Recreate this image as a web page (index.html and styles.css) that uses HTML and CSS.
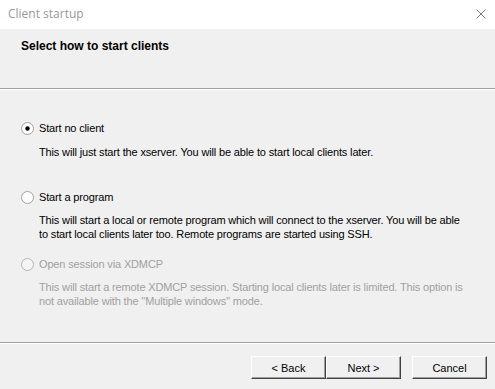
FILE: index.html
```html
<html lang="en">
  <head>
    <meta charset="UTF-8" />
    <link rel="stylesheet" href="styles.css">
    <title>Client startup</title>
  </head>
  <body>
    <div class="window">
      <div class="titlebar">
        <span class="title">Client startup</span>
        <svg class="close" width="10" height="10" viewBox="0 0 10 10">
          <path d="M0.5 0.5 L9.5 9.5 M9.5 0.5 L0.5 9.5" stroke="#7a7a7a" stroke-width="1" fill="none" />
        </svg>
      </div>

      <div class="header">
        <h1>Select how to start clients</h1>
      </div>

      <main class="options">
        <div class="option option-first">
          <label class="choice">
            <svg class="radio" width="13" height="13" viewBox="0 0 13 13">
              <circle cx="6.5" cy="6.5" r="6" fill="#fff" stroke="#a0a0a0" />
              <circle cx="6.5" cy="6.5" r="2.2" fill="#000" />
            </svg>
            Start no client
          </label>
          <p>This will just start the xserver. You will be able to start local clients later.</p>
        </div>

        <div class="option option-second">
          <label class="choice">
            <svg class="radio" width="13" height="13" viewBox="0 0 13 13">
              <circle cx="6.5" cy="6.5" r="6" fill="#fff" stroke="#a0a0a0" />
            </svg>
            Start a program
          </label>
          <p>This will start a local or remote program which will connect to the xserver. You will be able to start local clients later too. Remote programs are started using SSH.</p>
        </div>

        <div class="option option-third disabled">
          <label class="choice">
            <svg class="radio" width="13" height="13" viewBox="0 0 13 13">
              <circle cx="6.5" cy="6.5" r="6" fill="#f4f4f4" stroke="#b4b4b4" />
            </svg>
            Open session via XDMCP
          </label>
          <p>This will start a remote XDMCP session. Starting local clients later is limited. This option is not available with the ''Multiple windows'' mode.</p>
        </div>
      </main>

      <footer class="footer">
        <div class="pair">
          <button class="btn">&lt; Back</button>
          <button class="btn">Next &gt;</button>
        </div>
        <button class="btn">Cancel</button>
      </footer>
    </div>
  </body>
</html>
```

FILE: styles.css
```css
*,
*::after,
*::before {
  margin: 0;
  padding: 0;
  box-sizing: border-box;
}

body {
  background-color: #f0f0f0;
  font-family: "Liberation Sans", Arial, sans-serif;
  font-size: 11px;
  color: #000;
}

.window {
  width: 495px;
  height: 389px;
  display: flex;
  flex-direction: column;
  overflow: hidden;
}

.titlebar {
  height: 29px;
  background-color: #fff;
  display: flex;
  justify-content: space-between;
  align-items: center;
  padding: 0 9px 2px 8px;
}
.titlebar .title {
  font-family: "Open Sans", "Liberation Sans", sans-serif;
  font-size: 12px;
  color: #999999;
}

.header {
  height: 60px;
  background-color: #f0f0f0;
  border-bottom: 1px solid #a0a0a0;
  box-shadow: 0 1px 0 #fff;
  padding: 10px 0 0 21px;
}
.header h1 {
  font-size: 12px;
  font-weight: bold;
  line-height: 14px;
}

.options {
  height: 253px;
  padding: 0 0 0 21px;
  letter-spacing: -0.15px;
}
.option p {
  padding-left: 18px;
  padding-right: 28px;
  line-height: 14px;
}
.choice {
  display: flex;
  align-items: center;
  gap: 5px;
  line-height: 14px;
  height: 14px;
}
.option-first {
  margin-top: 32px;
}
.option-second {
  margin-top: 31px;
}
.option-third {
  margin-top: 16px;
}
.option .choice {
  margin-bottom: 10px;
}
.option-second .choice,
.option-third .choice {
  margin-bottom: 9px;
}
.disabled {
  color: #a0a0a0;
}

.footer {
  flex: 1;
  border-top: 1px solid #a0a0a0;
  box-shadow: inset 0 1px 0 #fff;
  display: flex;
  justify-content: flex-end;
  align-items: flex-start;
  gap: 11px;
  padding: 13px 8px 0 0;
}
.pair {
  display: flex;
}
.btn {
  width: 75px;
  height: 23px;
  background-color: #f0f0f0;
  border: 1px solid;
  border-color: #fff #404040 #404040 #fff;
  box-shadow: inset -1px -1px 0 #a0a0a0;
  font-family: "Liberation Sans", Arial, sans-serif;
  font-size: 11px;
  color: #000;
}
```
